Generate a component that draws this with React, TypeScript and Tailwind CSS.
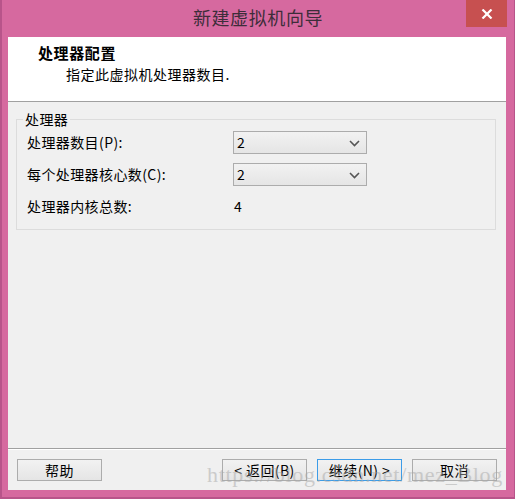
import React from "react";

const cjk = { fontFamily: '"Noto Sans CJK SC", "Noto Sans", sans-serif' };

function Combo({ value }: { value: string }) {
  return (
    <div className="flex h-[23px] w-[134px] items-center justify-between border border-[#acacac] bg-gradient-to-b from-[#f2f2f2] to-[#e5e5e5] pl-[3px] pr-[6px] text-[14px] text-black">
      <span>{value}</span>
      <svg width="11" height="7" viewBox="0 0 11 7" className="mt-[1px]">
        <path d="M1 1 L5.5 5.5 L10 1" fill="none" stroke="#555" strokeWidth="1.6" />
      </svg>
    </div>
  );
}

function Button({
  children,
  focused,
}: {
  children: React.ReactNode;
  focused?: boolean;
}) {
  return (
    <button
      type="button"
      className={
        "flex h-[22px] w-[85px] items-center justify-center border bg-gradient-to-b from-[#f2f2f2] to-[#e5e5e5] text-[14px] leading-none tracking-[0.4px] text-black " +
        (focused ? "border-[#3c9ce8]" : "border-[#acacac]")
      }
    >
      {children}
    </button>
  );
}

export default function App() {
  return (
    <div
      className="relative flex h-[499px] w-[515px] flex-col bg-[#d6699f] border-l-2 border-r border-b-2 border-[#b8548a]"
      style={cjk}
    >
      {/* title bar */}
      <div className="relative flex h-[37px] shrink-0 items-center justify-center">
        <span className="text-[18px] tracking-[0.6px] text-[#3d2d3a] -mt-[3px]">新建虚拟机向导</span>
        <div className="absolute right-[7px] top-0 flex h-[27px] w-[41px] items-center justify-center bg-[#c75050]">
          <svg width="12" height="10" viewBox="0 0 12 10">
            <path d="M1.5 0.5 L10.5 9.5 M10.5 0.5 L1.5 9.5" stroke="#fff" strokeWidth="2.2" />
          </svg>
        </div>
      </div>

      {/* client area */}
      <div className="ml-[6px] mr-[8px] mb-[7px] flex flex-1 flex-col bg-[#f0f0f0]">
        <div className="h-[65px] shrink-0 border-b border-[#a0a0a0] bg-white pl-[30px] pt-[6px]">
          <div className="text-[15px] font-bold leading-[20px] tracking-[0.6px] text-black">处理器配置</div>
          <div className="pl-[28px] text-[14px] leading-[22px] tracking-[0.5px] text-black">
            指定此虚拟机处理器数目.
          </div>
        </div>

        <div className="flex flex-1 flex-col px-[8px] pt-[17px]">
          <div className="relative mr-[2px] border border-[#dcdcdc] pl-[10px] pt-[11px] pb-[11px]">
            <span className="absolute -top-[11px] left-[6px] bg-[#f0f0f0] px-[2px] text-[14px] leading-[20px] tracking-[0.4px] text-black">
              处理器
            </span>
            <div className="flex flex-col gap-[9px] text-[14px] tracking-[0.4px] text-black">
              <div className="flex h-[23px] items-center">
                <span className="w-[206px]">处理器数目(P):</span>
                <Combo value="2" />
              </div>
              <div className="flex h-[23px] items-center">
                <span className="w-[206px]">每个处理器核心数(C):</span>
                <Combo value="2" />
              </div>
              <div className="flex h-[23px] items-center">
                <span className="w-[206px]">处理器内核总数:</span>
                <span className="pl-[1px]">4</span>
              </div>
            </div>
          </div>
        </div>

        <div className="shrink-0 border-t border-[#a0a0a0] shadow-[inset_0_1px_0_#ffffff] px-[9px] pt-[10px] pb-[9px]">
          <div className="flex items-center">
            <Button>帮助</Button>
            <div className="flex-1" />
            <div className="flex gap-[10px]">
              <Button>&lt; 返回(B)</Button>
              <Button focused>继续(N) &gt;</Button>
              <Button>取消</Button>
            </div>
          </div>
        </div>
      </div>

      {/* watermark */}
      <span
        className="pointer-events-none absolute left-[205px] top-[458px] text-[22px] tracking-[0.7px] text-[#a8a8a8] opacity-50"
        style={{ fontFamily: '"Liberation Serif", serif' }}
      >
        https://blog.csdn.net/mez_Blog
      </span>
    </div>
  );
}
